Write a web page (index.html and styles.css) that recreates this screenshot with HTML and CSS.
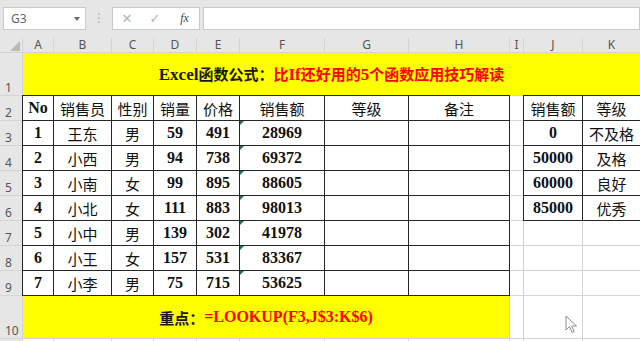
FILE: index.html
```html
<!DOCTYPE html>
<html>

<head>
  <link rel="stylesheet" href="styles.css">
</head>

<body>
  <div class="app">
    <!-- formula bar -->
    <div class="formula-bar">
      <div class="name-box"><span>G3</span><span class="caret"></span></div>
      <div class="grip">⋮</div>
      <div class="fx-box">
        <span class="btn">✕</span>
        <span class="btn">✓</span>
        <span class="fx">fx</span>
      </div>
      <div class="formula-input"></div>
    </div>

    <!-- sheet -->
    <div class="sheet">
      <div class="corner"><span class="corner-mark"></span></div>
      <div class="hd">A</div>
      <div class="hd">B</div>
      <div class="hd">C</div>
      <div class="hd">D</div>
      <div class="hd">E</div>
      <div class="hd">F</div>
      <div class="hd">G</div>
      <div class="hd">H</div>
      <div class="hd">I</div>
      <div class="hd">J</div>
      <div class="hd">K</div>

      <div class="rh">1</div>
      <div class="title">
        <span class="dark"><span class="lat">Excel</span>函数公式：</span><span class="red">比<span class="lat">If</span>还好用的<span class="lat">5</span>个函数应用技巧解读</span>
      </div>

      <div class="rh">2</div>
      <div class="c t b">No</div>
      <div class="c t">销售员</div>
      <div class="c t">性别</div>
      <div class="c t">销量</div>
      <div class="c t">价格</div>
      <div class="c t">销售额</div>
      <div class="c t">等级</div>
      <div class="c t">备注</div>
      <div class="c"></div>
      <div class="c t">销售额</div>
      <div class="c t">等级</div>

      <div class="rh">3</div>
      <div class="c t b">1</div>
      <div class="c t">王东</div>
      <div class="c t">男</div>
      <div class="c t b">59</div>
      <div class="c t b">491</div>
      <div class="c t b flag">28969</div>
      <div class="c t"></div>
      <div class="c t"></div>
      <div class="c"></div>
      <div class="c t b">0</div>
      <div class="c t">不及格</div>

      <div class="rh">4</div>
      <div class="c t b">2</div>
      <div class="c t">小西</div>
      <div class="c t">男</div>
      <div class="c t b">94</div>
      <div class="c t b">738</div>
      <div class="c t b flag">69372</div>
      <div class="c t"></div>
      <div class="c t"></div>
      <div class="c"></div>
      <div class="c t b">50000</div>
      <div class="c t">及格</div>

      <div class="rh">5</div>
      <div class="c t b">3</div>
      <div class="c t">小南</div>
      <div class="c t">女</div>
      <div class="c t b">99</div>
      <div class="c t b">895</div>
      <div class="c t b flag">88605</div>
      <div class="c t"></div>
      <div class="c t"></div>
      <div class="c"></div>
      <div class="c t b">60000</div>
      <div class="c t">良好</div>

      <div class="rh">6</div>
      <div class="c t b">4</div>
      <div class="c t">小北</div>
      <div class="c t">女</div>
      <div class="c t b">111</div>
      <div class="c t b">883</div>
      <div class="c t b flag">98013</div>
      <div class="c t"></div>
      <div class="c t"></div>
      <div class="c"></div>
      <div class="c t b">85000</div>
      <div class="c t">优秀</div>

      <div class="rh">7</div>
      <div class="c t b">5</div>
      <div class="c t">小中</div>
      <div class="c t">男</div>
      <div class="c t b">139</div>
      <div class="c t b">302</div>
      <div class="c t b flag">41978</div>
      <div class="c t"></div>
      <div class="c t"></div>
      <div class="c"></div>
      <div class="c"></div>
      <div class="c"></div>

      <div class="rh">8</div>
      <div class="c t b">6</div>
      <div class="c t">小王</div>
      <div class="c t">女</div>
      <div class="c t b">157</div>
      <div class="c t b">531</div>
      <div class="c t b flag">83367</div>
      <div class="c t"></div>
      <div class="c t"></div>
      <div class="c"></div>
      <div class="c"></div>
      <div class="c"></div>

      <div class="rh">9</div>
      <div class="c t b">7</div>
      <div class="c t">小李</div>
      <div class="c t">男</div>
      <div class="c t b">75</div>
      <div class="c t b">715</div>
      <div class="c t b flag">53625</div>
      <div class="c t"></div>
      <div class="c t"></div>
      <div class="c"></div>
      <div class="c"></div>
      <div class="c"></div>

      <div class="rh">10</div>
      <div class="foot"><span class="dark">重点：</span><span class="red lat">=LOOKUP(F3,J$3:K$6)</span></div>
      <div class="c"></div>
      <div class="c"></div>
      <div class="c"></div>

      <div class="rh"></div>
      <div class="c"></div>
      <div class="c"></div>
      <div class="c"></div>
      <div class="c"></div>
      <div class="c"></div>
      <div class="c"></div>
      <div class="c"></div>
      <div class="c"></div>
      <div class="c"></div>
      <div class="c"></div>
      <div class="c"></div>
    </div>

    <!-- mouse pointer -->
    <svg class="pointer" width="13" height="19" viewBox="0 0 13 19">
      <path d="M1 1 L1 15 L4.5 11.5 L7 17.5 L9.2 16.6 L6.8 11 L11.5 11 Z" fill="#fff" stroke="#8a8a8a" stroke-width="1" stroke-linejoin="round" />
    </svg>
  </div>
</body>

</html>
```

FILE: styles.css
```css
body {
  margin: 0;
  font-family: "Liberation Serif", "Noto Sans CJK SC", serif;
}

.app {
  position: relative;
  width: 640px;
  height: 341px;
  overflow: hidden;
  background-color: #e6e6e6;
}

/* Formula bar */
.formula-bar {
  display: flex;
  height: 38px;
  padding-top: 7px;
  box-sizing: border-box;
}

.name-box {
  margin-left: 3px;
  width: 83px;
  height: 23px;
  box-sizing: border-box;
  border: 1px solid #c9c9c9;
  background-color: #fff;
  display: flex;
  align-items: center;
  justify-content: space-between;
  padding: 0 5px 0 7px;
  font: 12px "Noto Sans", sans-serif;
  color: #666;
}

.caret {
  border-left: 3px solid transparent;
  border-right: 3px solid transparent;
  border-top: 4px solid #666;
}

.grip {
  width: 26px;
  text-align: center;
  color: #a8a8a8;
  font: 12px "DejaVu Sans", sans-serif;
  line-height: 23px;
}

.fx-box {
  width: 88px;
  height: 23px;
  box-sizing: border-box;
  border: 1px solid #c9c9c9;
  background-color: #fff;
  display: grid;
  grid-template-columns: 28px 28px 31px;
  align-items: center;
  justify-items: center;
}

.fx-box .btn {
  color: #b4b4b4;
  font: 13px "DejaVu Sans", sans-serif;
}

.fx-box .fx {
  color: #444;
  font: italic 12px "Liberation Serif", serif;
}

.formula-input {
  flex: 1;
  margin-left: 3px;
  height: 23px;
  box-sizing: border-box;
  border: 1px solid #c9c9c9;
  background-color: #fff;
}

/* Sheet grid */
.sheet {
  display: grid;
  grid-template-columns: 22px 30px 57px 41px 42px 42px 84px 83px 100px 13px 58px 57px;
  grid-template-rows: 14px 42px repeat(8, 24px) 42px 10px;
  gap: 1px;
  background-color: #d4d4d4;
}

.corner,
.hd,
.rh {
  background-color: #e6e6e6;
  color: #555;
  font: 12px "Noto Sans", sans-serif;
}

.corner {
  display: flex;
  justify-content: flex-end;
  align-items: flex-end;
  padding: 0 2px 1px 0;
}

.corner-mark {
  border-bottom: 10px solid #b9b9b9;
  border-left: 10px solid transparent;
}

.hd {
  display: flex;
  justify-content: center;
  align-items: center;
  line-height: 14px;
}

.rh {
  display: flex;
  align-items: flex-end;
  padding-left: 5px;
  line-height: 15px;
}

.c {
  position: relative;
  background-color: #fff;
  display: flex;
  justify-content: center;
  align-items: center;
  font-size: 15px;
  color: #111;
}

/* bordered table cells */
.t {
  box-shadow: 0 0 0 1px #262626;
}

.b {
  font-weight: bold;
  font-size: 16px;
}

/* number-stored-as-text marker */
.flag::before {
  content: "";
  position: absolute;
  top: 0;
  left: 0;
  border-top: 4px solid #217346;
  border-right: 4px solid transparent;
}

.title,
.foot {
  background-color: #ffff00;
  display: flex;
  justify-content: center;
  align-items: center;
  font-size: 15px;
  font-weight: bold;
}

.title {
  grid-column: 2 / span 11;
}

.foot {
  grid-column: 2 / span 8;
}

.title .lat {
  font-size: 17px;
}

.foot .lat {
  font-size: 16px;
}

.dark {
  color: #1a1a0a;
}

.red {
  color: #ff0000;
}

.pointer {
  position: absolute;
  left: 565px;
  top: 315px;
}
```
